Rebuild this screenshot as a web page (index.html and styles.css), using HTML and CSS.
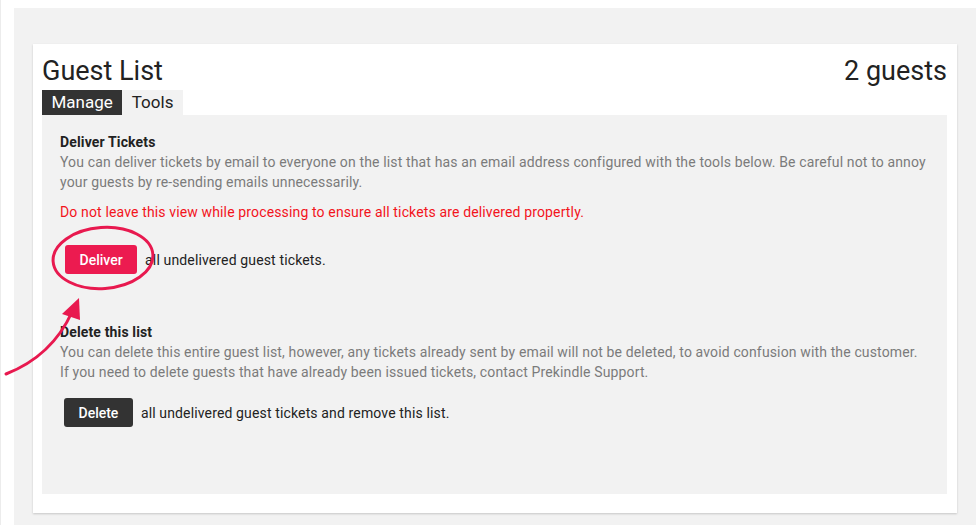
FILE: index.html
```html
<!DOCTYPE html>
<html lang="en">
<head>
<meta charset="utf-8">
<title>Guest List</title>
<link rel="stylesheet" href="styles.css">
</head>
<body>
<div class="page">
  <div class="shell">
    <section class="card">
      <header class="card-head">
        <h1 class="title">Guest List</h1>
        <div class="count">2 guests</div>
      </header>
      <nav class="tabs">
        <span class="tab tab-active">Manage</span>
        <span class="tab">Tools</span>
      </nav>
      <div class="panel">
        <h2 class="sec-title">Deliver Tickets</h2>
        <p class="sec-text">You can deliver tickets by email to everyone on the list that has an email address configured with the tools below. Be careful not to annoy your guests by re-sending emails unnecessarily.</p>
        <p class="warn">Do not leave this view while processing to ensure all tickets are delivered propertly.</p>
        <div class="action action-deliver">
          <button class="btn btn-pink">Deliver</button>
          <span class="action-text">all undelivered guest tickets.</span>
        </div>

        <h2 class="sec-title sec-second">Delete this list</h2>
        <p class="sec-text">You can delete this entire guest list, however, any tickets already sent by email will not be deleted, to avoid confusion with the customer. If you need to delete guests that have already been issued tickets, contact Prekindle Support.</p>
        <div class="action action-delete">
          <button class="btn btn-dark">Delete</button>
          <span class="action-text">all undelivered guest tickets and remove this list.</span>
        </div>
      </div>
    </section>
  </div>
</div>
<svg class="annotation" width="978" height="525" viewBox="0 0 978 525" aria-hidden="true">
  <ellipse cx="103" cy="258" rx="50" ry="30.5" transform="rotate(-4 103 258)" fill="none" stroke="#e8194f" stroke-width="3"/>
  <path d="M6 374 Q52 356 72 312" fill="none" stroke="#e8194f" stroke-width="3" stroke-linecap="round"/>
  <polygon points="79,298 62,314 80,320" fill="#e8194f"/>
</svg>
</body>
</html>
```

FILE: styles.css
```css
* { box-sizing: border-box; }

html, body {
  margin: 0;
  padding: 0;
  background: #ffffff;
}

body {
  font-family: Roboto, "Liberation Sans", Arial, sans-serif;
  color: #222;
  width: 978px;
  height: 525px;
  overflow: hidden;
  position: relative;
}

.page {
  border-left: 1px solid #ececec;
  padding: 8px 2px 0 13px;
  height: 525px;
}

.shell {
  background: #f2f2f2;
  padding: 36px 19px 4px 19px;
  height: 517px;
}

.card {
  background: #fff;
  box-shadow: 0 1px 2px rgba(0, 0, 0, 0.18);
  padding: 12px 10px 19px 9px;
}

.card-head {
  display: flex;
  justify-content: space-between;
  align-items: baseline;
  height: 30px;
  margin-bottom: 4px;
}

.title, .count {
  margin: 0;
  font-size: 27px;
  font-weight: 400;
  line-height: 30px;
  color: #222;
}

.tabs {
  display: flex;
  height: 25px;
}

.tab {
  font-size: 17px;
  line-height: 25px;
  padding: 0 9.5px;
  background: #f2f2f2;
  color: #222;
}

.tab-active {
  background: #333;
  color: #fff;
}

.panel {
  background: #f2f2f2;
  padding: 17px 18px 67px 18px;
  letter-spacing: 0.14px;
}

.sec-title {
  margin: 0;
  font-size: 14px;
  font-weight: 700;
  line-height: 20px;
  color: #222;
}

.sec-second {
  margin-top: 48px;
}

.sec-text {
  margin: 0;
  font-size: 14px;
  line-height: 20px;
  color: #7b7b7b;
}

.warn {
  margin: 10px 0 0 0;
  font-size: 14px;
  line-height: 20px;
  color: #f3141c;
}

.action {
  display: flex;
  align-items: center;
  gap: 8px;
}

.action-deliver {
  margin: 23px 0 0 5px;
}

.action-delete {
  margin: 16px 0 0 4px;
}

.action-text {
  font-size: 14px;
  color: #222;
}

.btn {
  font-family: Roboto, "Liberation Sans", Arial, sans-serif;
  font-size: 14px;
  font-weight: 500;
  letter-spacing: 0;
  color: #fff;
  border: 0;
  border-radius: 3px;
  height: 29px;
  padding: 0 14.5px;
}

.btn-pink { background: #ec1b50; }
.btn-dark { background: #333; }

.annotation {
  position: absolute;
  left: 0;
  top: 0;
  pointer-events: none;
}
```
